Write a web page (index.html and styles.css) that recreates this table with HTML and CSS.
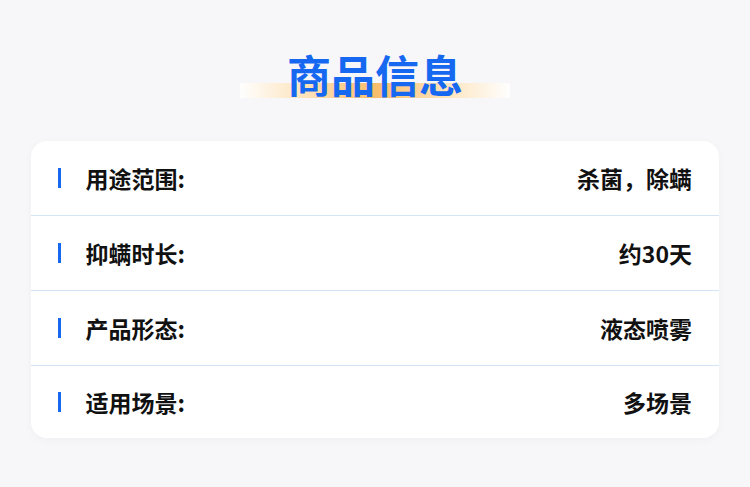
FILE: index.html
```html
<!DOCTYPE html>
<html lang="zh">
<head>
<meta charset="utf-8">
<link rel="stylesheet" href="styles.css">
</head>
<body>
<div class="page">
  <div class="title-wrap">
    <div class="title-bar"></div>
    <h1 class="title">商品信息</h1>
  </div>
  <div class="card">
    <div class="row"><span class="mark"></span><span class="label">用途范围:</span><span class="value">杀菌，除螨</span></div>
    <div class="row"><span class="mark"></span><span class="label">抑螨时长:</span><span class="value">约30天</span></div>
    <div class="row"><span class="mark"></span><span class="label">产品形态:</span><span class="value">液态喷雾</span></div>
    <div class="row"><span class="mark"></span><span class="label">适用场景:</span><span class="value">多场景</span></div>
  </div>
</div>
</body>
</html>
```

FILE: styles.css
```css
html, body {
  margin: 0;
  padding: 0;
  background: #f7f7f9;
  font-family: "Noto Sans CJK SC", "Noto Sans", sans-serif;
}
.page {
  width: 750px;
  height: 487px;
  padding: 44px 31px 0;
  box-sizing: border-box;
}
.title-wrap {
  position: relative;
  height: 97px;
  display: flex;
  justify-content: center;
}
.title-bar {
  position: absolute;
  left: 209px;
  width: 270px;
  top: 39px;
  height: 15px;
  background: linear-gradient(90deg, rgba(255,255,255,0.9) 0%, #fde6c2 22%, #f9bd6a 50%, #fde6c2 78%, rgba(255,255,255,0.9) 100%);
}
.title {
  position: relative;
  margin: 0;
  font-size: 44px;
  line-height: 60px;
  font-weight: 700;
  color: #1668f0;
}
.card {
  background: #fff;
  border-radius: 16px;
  box-shadow: 0 2px 10px rgba(0,0,0,0.03);
  display: flex;
  flex-direction: column;
}
.row {
  height: 74px;
  display: flex;
  align-items: center;
  padding: 0 27px;
  border-bottom: 1px solid #d5e3f6;
}
.row:last-child {
  border-bottom: none;
  height: 72px;
}
.mark {
  width: 2.5px;
  height: 20px;
  background: #1668f0;
  margin-right: 25px;
}
.label, .value {
  font-size: 23px;
  font-weight: 700;
  color: #111;
}
.value {
  margin-left: auto;
}
```
